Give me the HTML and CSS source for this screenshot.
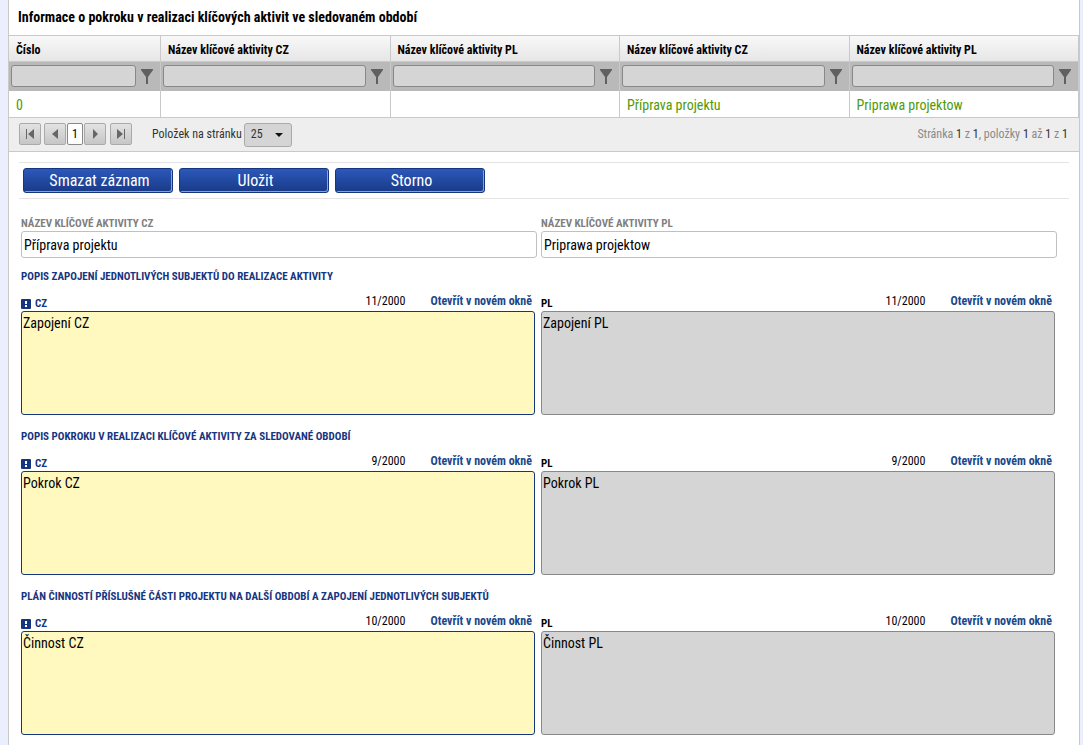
FILE: index.html
```html
<!DOCTYPE html>
<html lang="cs">
<head>
<meta charset="utf-8">
<title>Klíčové aktivity</title>
<link rel="stylesheet" href="styles.css">
</head>
<body>
<svg class="defs" aria-hidden="true">
  <symbol id="funnel" viewBox="0 0 12 15"><path d="M0 0H12V1L7 8V15H5V8L0 1Z" fill="#606060"/></symbol>
</svg>
<main class="panel">
  <h1 class="title">Informace o pokroku v realizaci klíčových aktivit ve sledovaném období</h1>
  <table class="grid">
    <colgroup><col class="col-number"><col><col><col><col></colgroup>
    <thead>
      <tr class="grid-head"><th>Číslo</th><th>Název klíčové aktivity CZ</th><th>Název klíčové aktivity PL</th><th>Název klíčové aktivity CZ</th><th>Název klíčové aktivity PL</th></tr>
      <tr class="grid-filter">
        <td><div class="filter"><input type="text" aria-label="Filtr Číslo"><button type="button" aria-label="Filtrovat"><svg><use href="#funnel"/></svg></button></div></td>
        <td><div class="filter"><input type="text" aria-label="Filtr CZ"><button type="button" aria-label="Filtrovat"><svg><use href="#funnel"/></svg></button></div></td>
        <td><div class="filter"><input type="text" aria-label="Filtr PL"><button type="button" aria-label="Filtrovat"><svg><use href="#funnel"/></svg></button></div></td>
        <td><div class="filter"><input type="text" aria-label="Filtr název CZ"><button type="button" aria-label="Filtrovat"><svg><use href="#funnel"/></svg></button></div></td>
        <td><div class="filter"><input type="text" aria-label="Filtr název PL"><button type="button" aria-label="Filtrovat"><svg><use href="#funnel"/></svg></button></div></td>
      </tr>
    </thead>
    <tbody>
      <tr class="grid-row"><td>0</td><td></td><td></td><td>Příprava projektu</td><td>Priprawa projektow</td></tr>
    </tbody>
  </table>
  <div class="pager">
    <nav class="pages" aria-label="Stránkování">
      <button type="button" aria-label="První"><svg viewBox="0 0 10 10"><path d="M1 0H2V10H1ZM9 0V10L3 5Z"/></svg></button>
      <button type="button" aria-label="Předchozí"><svg viewBox="0 0 10 10"><path d="M8 0V10L2 5Z"/></svg></button>
      <a class="current" href="#">1</a>
      <button type="button" aria-label="Další"><svg viewBox="0 0 10 10"><path d="M3 0V10L8 5Z"/></svg></button>
      <button type="button" class="last" aria-label="Poslední"><svg viewBox="0 0 10 10"><path d="M1 0V10L7 5ZM8 0H9V10H8Z"/></svg></button>
    </nav>
    <label class="size-label" for="size">Položek na stránku</label>
    <span class="select"><select id="size"><option>25</option></select><svg viewBox="0 0 8 4"><path d="M0 0H8L4 4Z"/></svg></span>
    <p class="status">Stránka <b>1</b> z <b>1</b>, položky <b>1</b> až <b>1</b> z <b>1</b></p>
  </div>
  <div class="toolbar">
    <button type="button">Smazat záznam</button>
    <button type="button">Uložit</button>
    <button type="button">Storno</button>
  </div>
  <form class="form">
    <div class="pair">
      <div class="field"><label for="ncz">NÁZEV KLÍČOVÉ AKTIVITY CZ</label><input id="ncz" type="text" value="Příprava projektu"></div>
      <div class="field"><label for="npl">NÁZEV KLÍČOVÉ AKTIVITY PL</label><input id="npl" type="text" value="Priprawa projektow"></div>
    </div>
    <div class="groups">
    <section class="group">
      <h2>POPIS ZAPOJENÍ JEDNOTLIVÝCH SUBJEKTŮ DO REALIZACE AKTIVITY</h2>
      <div class="pair">
        <div class="area required"><div class="meta"><label for="a1"><svg class="mark" viewBox="0 0 10 10"><rect width="10" height="10" rx="1"/><path d="M4 2H6V5H4ZM4 6H6V8H4Z"/></svg>CZ</label><span class="count">11/2000</span><a href="#">Otevřít v novém okně</a></div><textarea id="a1">Zapojení CZ</textarea></div>
        <div class="area"><div class="meta"><label for="b1">PL</label><span class="count">11/2000</span><a href="#">Otevřít v novém okně</a></div><textarea id="b1" readonly>Zapojení PL</textarea></div>
      </div>
    </section>
    <section class="group">
      <h2>POPIS POKROKU V REALIZACI KLÍČOVÉ AKTIVITY ZA SLEDOVANÉ OBDOBÍ</h2>
      <div class="pair">
        <div class="area required"><div class="meta"><label for="a2"><svg class="mark" viewBox="0 0 10 10"><rect width="10" height="10" rx="1"/><path d="M4 2H6V5H4ZM4 6H6V8H4Z"/></svg>CZ</label><span class="count">9/2000</span><a href="#">Otevřít v novém okně</a></div><textarea id="a2">Pokrok CZ</textarea></div>
        <div class="area"><div class="meta"><label for="b2">PL</label><span class="count">9/2000</span><a href="#">Otevřít v novém okně</a></div><textarea id="b2" readonly>Pokrok PL</textarea></div>
      </div>
    </section>
    <section class="group">
      <h2>PLÁN ČINNOSTÍ PŘÍSLUŠNÉ ČÁSTI PROJEKTU NA DALŠÍ OBDOBÍ A ZAPOJENÍ JEDNOTLIVÝCH SUBJEKTŮ</h2>
      <div class="pair">
        <div class="area required"><div class="meta"><label for="a3"><svg class="mark" viewBox="0 0 10 10"><rect width="10" height="10" rx="1"/><path d="M4 2H6V5H4ZM4 6H6V8H4Z"/></svg>CZ</label><span class="count">10/2000</span><a href="#">Otevřít v novém okně</a></div><textarea id="a3">Činnost CZ</textarea></div>
        <div class="area"><div class="meta"><label for="b3">PL</label><span class="count">10/2000</span><a href="#">Otevřít v novém okně</a></div><textarea id="b3" readonly>Činnost PL</textarea></div>
      </div>
    </section>
    </div>
  </form>
</main>
</body>
</html>
```
FILE: styles.css
```css
* { box-sizing: border-box; }
body {
  margin: 0;
  padding: 0 3px 0 8px;
  background: #ebeefc;
  color: #000;
  font-family: "Roboto Condensed", "Liberation Sans Narrow", Roboto, sans-serif;
  font-size: 12px;
}
button, input, select, textarea { font-family: inherit; color: inherit; margin: 0; }
a { text-decoration: none; }
.defs { display: none; }
.panel { min-height: 100vh; background: #fff; border: solid #c9c9c9; border-width: 0 1px; padding-bottom: 10px; }
.title { margin: 0; padding: 7px 9px 8px; font-size: 14px; line-height: 20px; font-weight: 700; }

.grid { width: 100%; table-layout: fixed; border-collapse: separate; border-spacing: 0; border-top: 1px solid #c9c9c9; }
.col-number { width: 152px; }
.grid th, .grid td { border-right: 1px solid #c9c9c9; padding: 2px 7px 0; text-align: left; }
.grid-head th { height: 26px; border-bottom: 1px solid #c9c9c9; background: linear-gradient(#f8f8f8, #e6e6e6); font-size: 12px; font-weight: 700; }
.grid .grid-filter td { height: 29px; padding: 0 7px 1px 2px; background: #b9b9b9; }
.filter { display: flex; align-items: center; gap: 5px; }
.filter input { flex: 1; min-width: 0; height: 22px; border: 1px solid #888; border-radius: 3px; background: #d5d5d5; }
.filter button { width: 12px; height: 15px; padding: 0; border: 0; background: none; }
.filter svg { display: block; width: 12px; height: 15px; }
.grid-row td { height: 26px; color: #4f9a06; font-size: 14px; }

.pager { display: flex; align-items: center; height: 35px; padding: 0 11px 1px 10px; background: #eee; border: solid #c9c9c9; border-width: 1px 0; color: #333; }
.pages { display: flex; gap: 3px; }
.pages button, .current { height: 22px; border: 1px solid #aaa; border-radius: 2px; }
.pages button { display: grid; place-items: center; width: 22px; padding: 0; background: linear-gradient(#e2e2e2, #c6c6c6); }
.pages svg { width: 10px; height: 10px; fill: #666; }
.pages .last { margin-left: 1px; }
.current { display: grid; place-items: center; width: 16px; margin: 0 -2px; background: #fff; color: #000; border-color: #888; }
.size-label { margin: 0 2px 0 20px; }
.select { display: grid; align-items: center; margin-top: 2px; }
.select > * { grid-area: 1 / 1; }
.select select { appearance: none; width: 48px; height: 24px; padding: 0 0 2px 6px; border: 1px solid #aaa; border-radius: 3px; background: #d5d5d5; font-size: 12px; }
.select svg { justify-self: end; width: 8px; height: 4px; margin-right: 9px; fill: #111; pointer-events: none; }
.status { margin: 0 0 0 auto; color: #8a8a8a; }
.status b { color: #333; font-weight: 400; }

.toolbar { display: flex; gap: 6px; margin: 10px; padding: 5px 4px; border: solid #e3e3e3; border-width: 1px 0; }
.toolbar button { width: 150px; height: 25px; padding: 0 0 0 3px; border: 1px solid #16357f; border-radius: 3px; background: linear-gradient(#2c58bb, #193a86); box-shadow: inset -1px -1px #8ba0d0; color: #fff; font-size: 16px; }

.form { padding: 8px 22px 0 12px; }
.pair { display: grid; grid-template-columns: 1fr 1fr; gap: 4px; }
.field label { display: block; height: 14px; line-height: 14px; font-size: 11px; font-weight: 700; color: #808080; }
.field input { display: block; width: 100%; height: 27px; padding: 0 2px; border: 1px solid #c0c0c0; border-radius: 3px; font-size: 14px; }
.groups { display: grid; gap: 15px; padding-top: 12px; }
.group h2 { margin: 0 0 10px; line-height: 14px; font-size: 11px; font-weight: 700; color: #16357f; }
.area { padding-right: 2px; }
.meta { display: flex; height: 17px; line-height: 14px; }
.meta label { display: flex; align-items: center; padding-top: 2px; font-size: 11px; font-weight: 700; }
.required label { color: #16357f; }
.mark { width: 10px; height: 10px; margin-right: 4px; fill: #16357f; }
.mark path { fill: #fff; }
.count { margin-left: auto; }
.meta a { margin: 0 3px 0 25px; color: #204789; font-weight: 700; }
.area textarea { display: block; width: 100%; height: 104px; padding: 2px 1px; resize: none; border: 1px solid #888; border-radius: 3px; background: #d5d5d5; font-size: 14px; line-height: 18px; }
.required textarea { border-color: #16357f; background: #fff9c0; }
```
